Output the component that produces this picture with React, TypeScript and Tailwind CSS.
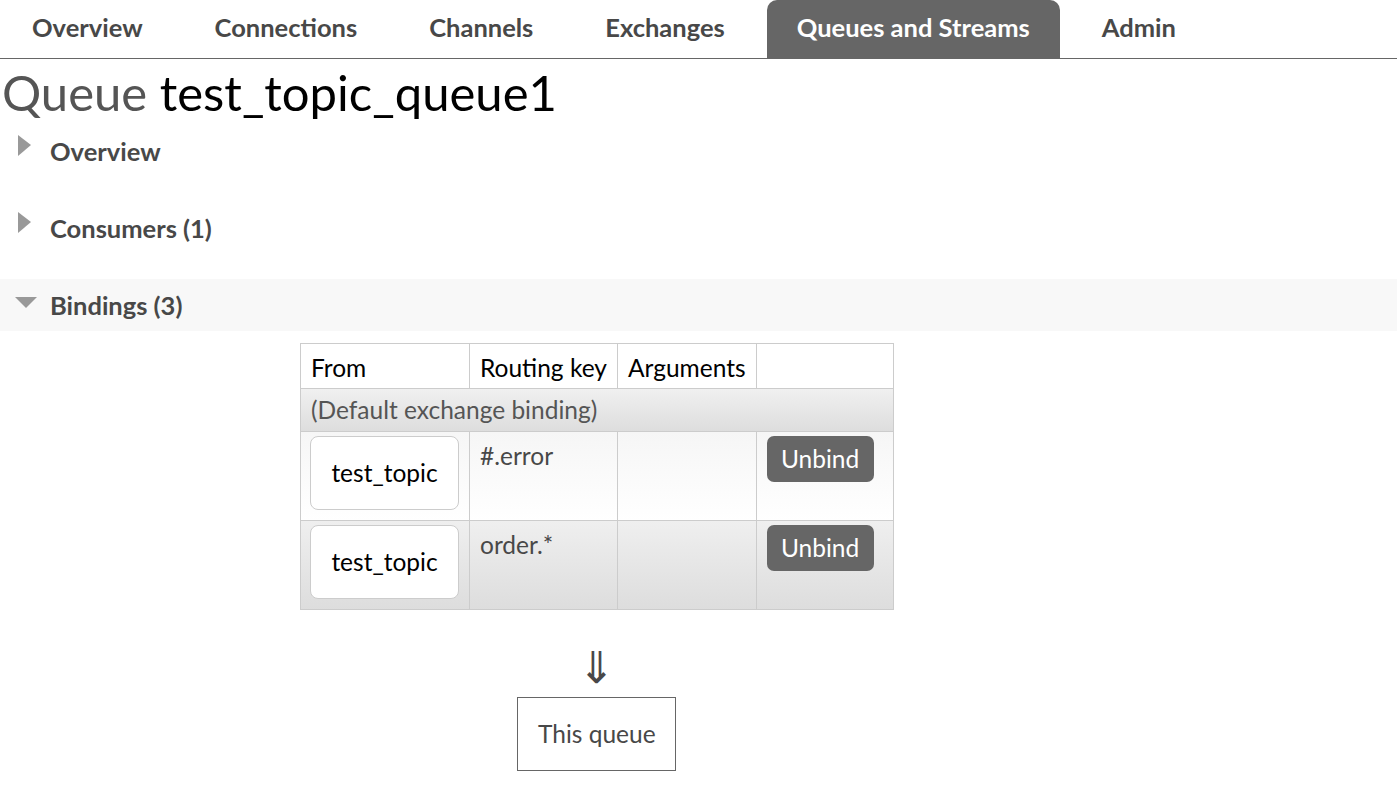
const tabs = ['Overview', 'Connections', 'Channels', 'Exchanges', 'Queues and Streams', 'Admin'];

function Tab({ label, active }: { label: string; active?: boolean }) {
  return (
    <div
      className={
        'flex h-[58px] items-center px-[30px] pb-[4px] text-[25.5px] font-bold ' +
        (active ? 'rounded-t-[10px] bg-[#666666] text-white' : 'text-[#484848]')
      }
    >
      {label}
    </div>
  );
}

function Section({ label, open }: { label: string; open?: boolean }) {
  return (
    <div className={'flex h-[52px] items-center ' + (open ? 'bg-[#f8f8f8]' : '')}>
      <div className="flex w-[50px] justify-center pl-[2px]">
        {open ? (
          <svg width="22" height="12" viewBox="0 0 22 12" className="mb-[4px]">
            <polygon points="0,0 22,0 11,11" fill="#999999" />
          </svg>
        ) : (
          <svg width="13" height="22" viewBox="0 0 13 22" className="mb-[10px] mr-[4px]">
            <polygon points="0,0 13,10 0,21" fill="#999999" />
          </svg>
        )}
      </div>
      <span className="text-[25.5px] font-bold text-[#484848]">{label}</span>
    </div>
  );
}

function BindingRow({ routingKey, odd }: { routingKey: string; odd?: boolean }) {
  return (
    <tr
      className={
        'h-[89px] align-top ' +
        (odd
          ? 'bg-gradient-to-b from-[#f6f6f6] to-[#ffffff]'
          : 'bg-gradient-to-b from-[#efefef] to-[#dddddd]')
      }
    >
      <td className="border border-[#cccccc] px-[9px] pt-[4px]">
        <div className="flex h-[74px] w-[149px] items-center justify-center rounded-[8px] border border-[#cccccc] bg-white text-black">
          test_topic
        </div>
      </td>
      <td className="border border-[#cccccc] px-[10px] pt-[6px] text-[#484848]">{routingKey}</td>
      <td className="border border-[#cccccc]"></td>
      <td className="border border-[#cccccc] px-[10px] pt-[4px]">
        <button className="h-[46px] w-[107px] rounded-[7px] bg-[#666666] text-white">Unbind</button>
      </td>
    </tr>
  );
}

export default function App() {
  return (
    <div className="min-h-[791px] bg-white font-['Lato','Noto_Sans',sans-serif] text-[#484848]">
      <div className="flex gap-[12px] border-b border-[#666666] pl-[2px]">
        {tabs.map((t) => (
          <Tab key={t} label={t} active={t === 'Queues and Streams'} />
        ))}
      </div>

      <h1 className="mt-[1px] pl-[2px] text-[49px] leading-[64px] font-normal">
        <span className="text-[#555555]">Queue </span>
        <span className="text-black">test_topic_queue1</span>
      </h1>

      <div className="mt-[1px] flex flex-col gap-[25px]">
        <Section label="Overview" />
        <Section label="Consumers (1)" />
        <Section label="Bindings (3)" open />
      </div>

      <div className="ml-[300px] mt-[12px] flex w-fit flex-col items-center text-[24.5px]">
        <table className="border-collapse border border-[#cccccc]">
          <thead>
            <tr className="h-[45px] bg-white text-left text-black">
              <th className="w-[169px] border border-[#cccccc] px-[10px] pt-[4px] font-normal">From</th>
              <th className="w-[148px] border border-[#cccccc] px-[10px] pt-[4px] font-normal">Routing key</th>
              <th className="w-[138px] border border-[#cccccc] px-[10px] pt-[4px] font-normal">Arguments</th>
              <th className="w-[137px] border border-[#cccccc]"></th>
            </tr>
          </thead>
          <tbody>
            <tr className="h-[43px] bg-gradient-to-b from-[#f0f0f0] to-[#dddddd]">
              <td colSpan={4} className="border border-[#cccccc] px-[10px] pt-[1px] text-[#555555]">
                (Default exchange binding)
              </td>
            </tr>
            <BindingRow routingKey="#.error" odd />
            <BindingRow routingKey="order.*" />
          </tbody>
        </table>

        <div className="mt-[34px] text-[44px] leading-[44px] text-[#484848]">⇓</div>
        <div className="mt-[9px] flex h-[74px] w-[159px] items-center justify-center border border-[#666666] text-[#484848]">
          This queue
        </div>
      </div>
    </div>
  );
}
